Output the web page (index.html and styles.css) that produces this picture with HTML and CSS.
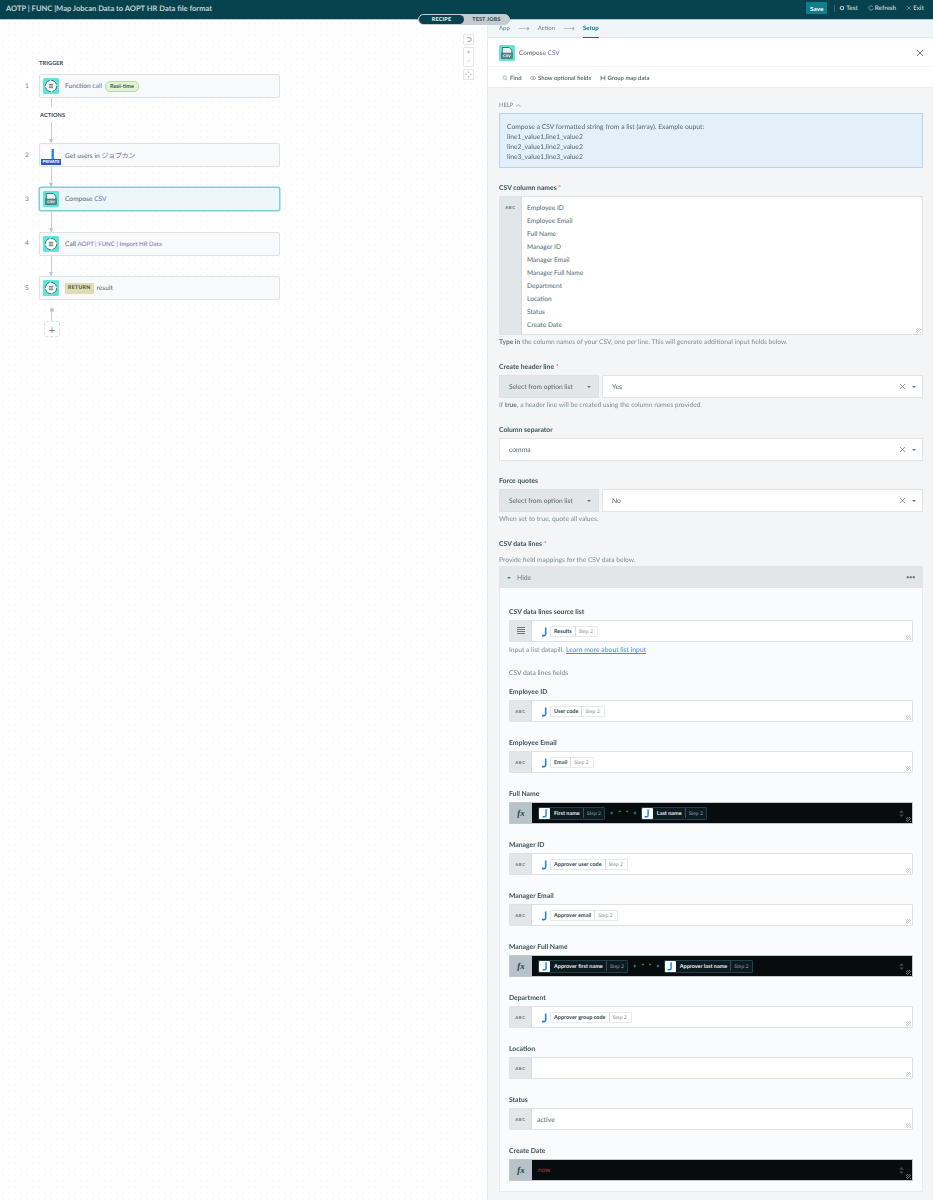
FILE: index.html
```html
<!DOCTYPE html>
<html lang="en">
<head>
<meta charset="utf-8">
<title>AOTP | FUNC |Map Jobcan Data to AOPT HR Data file format</title>
<link rel="stylesheet" href="styles.css">
</head>
<body>
<svg class="defs" aria-hidden="true">
  <symbol id="fn" viewBox="0 0 16 16">
    <rect width="16" height="16" rx="1.5" fill="#5fe6d6"/>
    <circle cx="8" cy="8" r="5.6" fill="#fff" stroke="#37505a" stroke-width=".8" stroke-dasharray="7 1.6"/>
    <path d="M5.8 6.3h4.4M5.8 8h4.4M5.8 9.700h4.400" stroke="#37505a" stroke-width=".8" fill="none"/>
  </symbol>
  <symbol id="j" viewBox="0 0 12 12">
    <path d="M7.300 1.500v7.200q0 1.800-1.800 1.800H3.200" fill="none" stroke="#1f7fe8" stroke-width="1.700"/>
  </symbol>
  <symbol id="updown" viewBox="0 0 8 10">
    <path d="M4 1L6.500 4h-5zM4 9L1.500 6h5z" fill="#3c494f"/>
  </symbol>
</svg>

<header class="topbar">
  <h1 class="title">AOTP | FUNC |Map Jobcan Data to AOPT HR Data file format</h1>
  <div class="actions">
    <button class="save">Save</button>
    <span class="divider"></span>
    <a class="act"><svg viewBox="0 0 8 8" class="act-ic"><circle cx="4" cy="4" r="2.300" fill="none" stroke="#b9cbd0" stroke-width="1.500"/></svg>Test</a>
    <a class="act"><svg viewBox="0 0 8 8" class="act-ic"><path d="M6.500 2.200A3 3 0 1 0 7 4.600" fill="none" stroke="#b9cbd0" stroke-width=".8"/></svg>Refresh</a>
    <a class="act"><svg viewBox="0 0 8 8" class="act-ic"><path d="M1.500 1.500l5 5M6.500 1.500l-5 5" stroke="#b9cbd0" stroke-width=".7"/></svg>Exit</a>
  </div>
</header>

<div class="toggle"><span class="tg on">RECIPE</span><span class="tg">TEST JOBS</span></div>

<div class="layout">
  <main class="canvas">
    <div class="zoomctl">
      <span class="zbtn"><svg viewBox="0 0 10 10"><path d="M3.500 3h2.500a2 2 0 0 1 0 4H4" fill="none" stroke="#65777f" stroke-width=".8"/></svg></span>
      <span class="zgroup"><span class="zsym">+</span><span class="zsym">−</span></span>
      <span class="zbtn"><svg viewBox="0 0 10 10"><path d="M5 1.500l1 1.200H4zM5 8.500l1-1.200H4zM1.500 5l1.200-1v2zM8.500 5l-1.200-1v2z" fill="#7b8b92"/></svg></span>
    </div>

    <div class="section-label first">TRIGGER</div>
    <div class="step-row">
      <span class="num">1</span>
      <div class="step"><svg class="ic"><use href="#fn"/></svg><span>Function <em>call</em></span><span class="rt">Real-time</span></div>
    </div>
    <div class="line l-a"></div>
    <div class="section-label actions-label">ACTIONS</div>
    <div class="line l-b arrow"></div>
    <div class="step-row">
      <span class="num">2</span>
      <div class="step"><span class="ic private"><svg class="j-main"><use href="#j"/></svg><span class="priv">PRIVATE</span></span><span>Get users in <em class="jp">ジョブカン</em></span></div>
    </div>
    <div class="line l-c arrow"></div>
    <div class="step-row">
      <span class="num">3</span>
      <div class="step active">
        <svg class="ic" viewBox="0 0 16 16"><rect width="16" height="16" rx="1.500" fill="#5fe6d6"/><path d="M3.300 8V2.500h7l2.500 2.500v3" fill="#e9fbf8" stroke="#33505a" stroke-width=".8"/><rect x="2.500" y="8" width="11" height="5.500" fill="#5b8a8c" stroke="#33505a" stroke-width=".5"/><text x="8" y="12.300" text-anchor="middle" class="csvtxt">CSV</text></svg>
        <span>Compose <em>CSV</em></span>
      </div>
    </div>
    <div class="line l-c arrow"></div>
    <div class="step-row">
      <span class="num">4</span>
      <div class="step"><svg class="ic"><use href="#fn"/></svg><span>Call <em class="narrow">AOPT | FUNC | Import HR Data</em></span></div>
    </div>
    <div class="line l-c arrow"></div>
    <div class="step-row">
      <span class="num">5</span>
      <div class="step"><svg class="ic"><use href="#fn"/></svg><span class="ret">RETURN</span><span>result</span></div>
    </div>
    <div class="line l-d"></div>
    <button class="add">+</button>
  </main>

  <aside class="panel">
    <nav class="tabs">
      <span class="tab">App</span><span class="tarrow">⟶</span><span class="tab">Action</span><span class="tarrow">⟶</span><span class="tab current">Setup</span>
    </nav>
    <div class="panel-head">
      <svg class="ic" viewBox="0 0 16 16"><rect width="16" height="16" rx="1.500" fill="#5fe6d6"/><path d="M3.300 8V2.500h7l2.500 2.500v3" fill="#e9fbf8" stroke="#33505a" stroke-width=".8"/><rect x="2.500" y="8" width="11" height="5.500" fill="#5b8a8c" stroke="#33505a" stroke-width=".5"/><text x="8" y="12.300" text-anchor="middle" class="csvtxt">CSV</text></svg>
      <span class="head-text">Compose <em>CSV</em></span>
      <svg class="close" viewBox="0 0 8 8"><path d="M1 1l6 6M7 1L1 7" stroke="#4c626a" stroke-width=".8"/></svg>
    </div>
    <div class="toolbar">
      <span class="tool"><svg viewBox="0 0 8 8"><circle cx="3.500" cy="3.500" r="2.300" fill="none" stroke="#6d8087" stroke-width=".7"/><path d="M5.200 5.200L7 7" stroke="#6d8087" stroke-width=".7"/></svg>Find</span>
      <span class="tool"><svg viewBox="0 0 8 8"><ellipse cx="4" cy="4" rx="3.500" ry="2.300" fill="none" stroke="#6d8087" stroke-width=".7"/><circle cx="4" cy="4" r="1" fill="#6d8087"/></svg>Show optional fields</span>
      <span class="tool"><svg viewBox="0 0 8 8"><path d="M1.500 1v6M6.500 1v6M1.500 4h5" stroke="#5a6f77" stroke-width="1.200"/></svg>Group map data</span>
    </div>

    <div class="form">
      <div class="help-label">HELP <svg viewBox="0 0 8 8"><path d="M1.500 5.200L4 2.800l2.500 2.400" fill="none" stroke="#7c8d94" stroke-width=".7"/></svg></div>
      <div class="help">
        <p>Compose a CSV formatted string from a list (array). Example ouput:</p>
        <p>line1_value1,line1_value2</p>
        <p>line2_value1,line2_value2</p>
        <p>line3_value1,line3_value2</p>
      </div>

      <label class="lab">CSV column names <i>*</i></label>
      <div class="box tall">
        <span class="gut abc">ABC</span>
        <div class="lines">
          <div>Employee ID</div><div>Employee Email</div><div>Full Name</div><div>Manager ID</div><div>Manager Email</div><div>Manager Full Name</div><div>Department</div><div>Location</div><div>Status</div><div>Create Date</div>
        </div>
        <span class="grip"></span>
      </div>
      <p class="hint"><b>Type in</b> the column names of your CSV, one per line. This will generate additional input fields below.</p>

      <label class="lab">Create header line <i>*</i></label>
      <div class="selrow">
        <span class="mode">Select from option list<span class="caret"></span></span>
        <span class="sel"><span class="val">Yes</span><svg class="x" viewBox="0 0 8 8"><path d="M1 1l6 6M7 1L1 7" stroke="#66797f" stroke-width=".8"/></svg><span class="caret"></span></span>
      </div>
      <p class="hint">If <b>true</b>, a header line will be created using the column names provided.</p>

      <label class="lab">Column separator</label>
      <div class="selrow gap">
        <span class="sel"><span class="val">comma</span><svg class="x" viewBox="0 0 8 8"><path d="M1 1l6 6M7 1L1 7" stroke="#66797f" stroke-width=".8"/></svg><span class="caret"></span></span>
      </div>

      <label class="lab">Force quotes</label>
      <div class="selrow">
        <span class="mode">Select from option list<span class="caret"></span></span>
        <span class="sel"><span class="val">No</span><svg class="x" viewBox="0 0 8 8"><path d="M1 1l6 6M7 1L1 7" stroke="#66797f" stroke-width=".8"/></svg><span class="caret"></span></span>
      </div>
      <p class="hint">When set to true, quote all values.</p>

      <label class="lab lab-tight">CSV data lines <i>*</i></label>
      <p class="hint intro">Provide field mappings for the CSV data below.</p>

      <section class="card">
        <div class="card-head"><span class="caret"></span><span class="hide">Hide</span><span class="dots">•••</span></div>
        <div class="card-body">
          <label class="lab">CSV data lines source list</label>
          <div class="box">
            <span class="gut"><svg viewBox="0 0 10 10"><path d="M1 1.500h8M1 3.500h8M1 5.500h8M1 7.500h8" stroke="#68787f" stroke-width="1"/></svg></span>
            <div class="content"><svg class="jlogo"><use href="#j"/></svg><span class="pill"><b>Results</b><span>Step 2</span></span></div>
            <span class="grip"></span>
          </div>
          <p class="hint listhint">Input a list datapill. <a>Learn more about list input</a></p>
          <p class="subhead">CSV data lines fields</p>

          <div class="field"><label class="lab">Employee ID</label>
            <div class="box"><span class="gut abc">ABC</span><div class="content"><svg class="jlogo"><use href="#j"/></svg><span class="pill"><b>User code</b><span>Step 2</span></span></div><span class="grip"></span></div></div>

          <div class="field"><label class="lab">Employee Email</label>
            <div class="box"><span class="gut abc">ABC</span><div class="content"><svg class="jlogo"><use href="#j"/></svg><span class="pill"><b>Email</b><span>Step 2</span></span></div><span class="grip"></span></div></div>

          <div class="field"><label class="lab">Full Name</label>
            <div class="box dark"><span class="gut fx">fx</span><div class="content">
              <span class="pill"><span class="jtile"><svg><use href="#j"/></svg></span><b>First name</b><span>Step 2</span></span>
              <span class="tok"><span class="op">+</span><span class="qt">"</span><span class="qt">"</span><span class="op">+</span></span>
              <span class="pill"><span class="jtile"><svg><use href="#j"/></svg></span><b>Last name</b><span>Step 2</span></span>
            </div><svg class="stepper"><use href="#updown"/></svg><span class="grip"></span></div></div>

          <div class="field"><label class="lab">Manager ID</label>
            <div class="box"><span class="gut abc">ABC</span><div class="content"><svg class="jlogo"><use href="#j"/></svg><span class="pill"><b>Approver user code</b><span>Step 2</span></span></div><span class="grip"></span></div></div>

          <div class="field"><label class="lab">Manager Email</label>
            <div class="box"><span class="gut abc">ABC</span><div class="content"><svg class="jlogo"><use href="#j"/></svg><span class="pill"><b>Approver email</b><span>Step 2</span></span></div><span class="grip"></span></div></div>

          <div class="field"><label class="lab">Manager Full Name</label>
            <div class="box dark"><span class="gut fx">fx</span><div class="content">
              <span class="pill"><span class="jtile"><svg><use href="#j"/></svg></span><b>Approver first name</b><span>Step 2</span></span>
              <span class="tok"><span class="op">+</span><span class="qt">"</span><span class="qt">"</span><span class="op">+</span></span>
              <span class="pill"><span class="jtile"><svg><use href="#j"/></svg></span><b>Approver last name</b><span>Step 2</span></span>
            </div><svg class="stepper"><use href="#updown"/></svg><span class="grip"></span></div></div>

          <div class="field"><label class="lab">Department</label>
            <div class="box"><span class="gut abc">ABC</span><div class="content"><svg class="jlogo"><use href="#j"/></svg><span class="pill"><b>Approver group code</b><span>Step 2</span></span></div><span class="grip"></span></div></div>

          <div class="field"><label class="lab">Location</label>
            <div class="box"><span class="gut abc">ABC</span><div class="content"></div><span class="grip"></span></div></div>

          <div class="field"><label class="lab">Status</label>
            <div class="box"><span class="gut abc">ABC</span><div class="content plain">active</div><span class="grip"></span></div></div>

          <div class="field last"><label class="lab">Create Date</label>
            <div class="box dark"><span class="gut fx">fx</span><div class="content"><span class="now">now</span></div><svg class="stepper"><use href="#updown"/></svg><span class="grip"></span></div></div>
        </div>
      </section>
    </div>
  </aside>
</div>
</body>
</html>
```
FILE: styles.css
```css
* { box-sizing: border-box; }
html, body { margin: 0; height: 1200px; overflow: hidden; }
body {
  font-family: "Lato", "Noto Sans CJK JP", sans-serif;
  font-size: 7px;
  color: #4b5f67;
  background: #fff;
  display: flex;
  flex-direction: column;
  position: relative;
  text-rendering: geometricPrecision;
  filter: blur(.3px);
  opacity: .999;
}
.defs { position: absolute; width: 0; height: 0; }
.csvtxt { font: 700 3.600px "Liberation Sans", sans-serif; fill: #fff; }
em { font-style: normal; color: #6a70bd; }
em.narrow { font-size: 6.100px; }

/* top bar */
.topbar {
  height: 20px;
  flex: none;
  background: #07434e;
  border-bottom: 1px solid #b9c7cb;
  display: flex;
  align-items: center;
  justify-content: space-between;
  padding: 0 9px 3px 6px;
}
.title { margin: 0; font-size: 7.550px; font-weight: 700; color: #c3d2d6; white-space: nowrap; }
.actions { display: flex; align-items: center; }
.save {
  width: 21px; height: 12px; border: 0; padding: 0;
  background: #0f7f8c; color: #fff; border-radius: 1px;
  font: 700 6.400px "Lato", sans-serif;
}
.divider { width: 1px; height: 7px; background: #33646e; margin: 0 4px 0 7px; }
.act { display: flex; align-items: center; gap: 1px; color: #b9cbd0; font-size: 6.300px; font-weight: 700; margin-right: 10px; }
.act:last-child { margin-right: 0; }
.act-ic { width: 6px; height: 6px; }

.toggle {
  position: absolute; left: 418px; top: 14px;
  width: 92px; height: 11px;
  background: #c5ccd1; border-radius: 6px;
  display: flex; align-items: stretch;
  font-size: 5.400px; font-weight: 900; letter-spacing: .2px;
  z-index: 3; color: #3d5058;
  border: 1px solid #c5ccd1;
}
.tg { display: flex; align-items: center; justify-content: center; flex: 1; }
.tg.on { flex: none; width: 45px; background: #07434e; color: #e6eef0; border-radius: 6px; }

.layout { display: flex; flex: 1; min-height: 0; }

/* canvas */
.canvas {
  width: 487px; flex: none;
  position: relative;
  padding: 37px 0 0 39px;
  background-color: #fff;
  background-image: radial-gradient(circle, #f0f2f4 .6px, transparent .8px);
  background-size: 6px 6px;
}
.zoomctl {
  position: absolute; left: 463px; top: 14px;
  width: 11px; display: flex; flex-direction: column; gap: 2px;
}
.zbtn, .zgroup {
  background: #fff; border: 1px solid #e2e6e9; border-radius: 1px;
  display: flex; align-items: center; justify-content: center;
}
.zbtn { height: 11px; }
.zbtn svg { width: 9px; height: 9px; }
.zgroup { height: 20px; flex-direction: column; }
.zsym { height: 9px; line-height: 9px; font-size: 6px; color: #8a989e; }
.section-label { font-size: 5.600px; font-weight: 900; color: #44565e; letter-spacing: .1px; line-height: 14px; }
.first { height: 12px; margin-bottom: 5px; }
.actions-label { height: 12px; margin: 2px 0 1px 1px; }
.step-row { position: relative; }
.num { position: absolute; left: -14px; top: 0; bottom: 0; display: flex; align-items: center; font-size: 6.500px; color: #6f8088; }
.step {
  width: 241px; height: 24px;
  background: #f8f9fb;
  border: 1px solid #dde2e7;
  border-radius: 2px;
  display: flex; align-items: center; gap: 6px;
  padding-left: 3px;
  font-size: 6.650px;
  color: #56666e;
}
.step.active { background: #edf6f9; border-color: #79d2d9; box-shadow: 0 0 0 .5px #79d2d9; }
.ic { width: 16px; height: 16px; flex: none; display: block; }
.private { position: relative; background: #fff; }
.j-main { width: 16px; height: 16px; }
.priv {
  position: absolute; left: -2px; bottom: -2px; width: 20px; height: 6px;
  background: #2758d6; color: #fff; font-size: 4.200px; font-weight: 900; line-height: 6px; text-align: center;
}
.jp { font-family: "Noto Sans CJK JP", sans-serif; font-size: 6.800px; }
.rt {
  margin-left: -3px; background: #dff3d6; border: 1px solid #b7dc9f; border-radius: 5px;
  font-size: 5.600px; color: #3e5b3b; font-weight: 700; padding: 0 4px; line-height: 9px;
}
.ret { background: #dddcb4; color: #55553a; font-size: 5.200px; font-weight: 900; padding: 0 3px; line-height: 11px; border-radius: 1px; letter-spacing: .3px; margin-right: -3px; }
.line { width: 1px; background: #c6ced4; margin-left: 12px; position: relative; }
.l-a { height: 9px; }
.l-b { height: 21px; }
.l-c { height: 20.400px; }
.l-d { height: 13px; margin-top: 8px; }
.arrow::after {
  content: ""; position: absolute; left: -2px; bottom: 0;
  border-left: 2.500px solid transparent; border-right: 2.500px solid transparent; border-top: 4px solid #b9c3c9;
}
.l-d::before { content: ""; position: absolute; left: -1.500px; top: 0; width: 4px; height: 4px; border-radius: 50%; background: #b9c3c9; }
.add {
  display: block; margin-left: 5px; width: 16px; height: 16px; padding: 0;
  border: 1px dashed #dbe0e4; background: #fff; border-radius: 2px;
  color: #7a8a90; font: 400 11px/13px "Lato", sans-serif;
}

/* panel */
.panel { flex: 1; min-width: 0; background: #f3f5f7; border-left: 1px solid #e9ecef; display: flex; flex-direction: column; }
.tabs {
  height: 18px; flex: none; background: #eef6f8;
  border-bottom: 1px solid #dbe7ea;
  display: flex; align-items: stretch; padding-left: 11px;
  font-size: 6px; color: #6b7d85;
}
.tab { display: flex; align-items: center; border-bottom: 1px solid transparent; height: 18px; }
.tab.current { color: #0e7480; font-weight: 700; border-bottom-color: #0e7480; }
.tarrow { display: flex; align-items: center; font-size: 8px; width: 28px; justify-content: center; color: #8c9ba1; font-family: "DejaVu Sans", sans-serif; }
.panel-head {
  height: 29px; flex: none; background: #fff;
  display: flex; align-items: center; gap: 4px; padding: 1px 9px 0 11px;
  font-size: 6.500px; color: #56666e;
  border-bottom: 1px solid #f1f3f5;
}
.head-text { padding-top: 2px; }
.close { width: 8px; height: 8px; margin-left: auto; }
.toolbar {
  height: 21px; flex: none; background: #fff;
  border-bottom: 1px solid #e8ebee;
  display: flex; align-items: center; gap: 8.500px; padding: 2px 0 0 14px;
  font-size: 5.900px; font-weight: 700; color: #5f7179;
}
.tool { display: flex; align-items: center; gap: 2px; }
.tool svg { width: 6px; height: 6px; }
.form { padding: 11px 10px 0 11px; flex: 1; }
.help-label { height: 12px; margin-bottom: 2px; display: flex; align-items: center; gap: 2px; font-size: 5.800px; color: #6d7f86; }
.help-label svg { width: 7px; height: 7px; }
.help {
  height: 55px; background: #e4f0f9; border: 1px solid #b5d5f0;
  padding: 8px 7px 0; margin-bottom: 13px; font-size: 6.750px; color: #51656d;
}
.help p { margin: 0; line-height: 10px; }
.lab { display: block; height: 12px; line-height: 14px; margin-bottom: 3px; font-size: 6.800px; font-weight: 700; color: #3e525a; }
.lab i { color: #e0534a; font-style: normal; font-weight: 400; }
.lab-tight { margin-bottom: 4px; }
.box {
  position: relative; display: flex; height: 22px;
  background: #fff; border: 1px solid #dde2e6; border-radius: 1px;
}
.tall { height: 139px; }
.gut {
  width: 22px; flex: none; background: #e3e6e9; border-right: 1px solid #d5dadf;
  display: flex; align-items: center; justify-content: center; color: #66787f;
}
.gut svg { width: 10px; height: 10px; }
.abc { font-size: 4.200px; font-weight: 900; letter-spacing: .7px; }
.tall .abc { align-items: flex-start; padding-top: 8px; }
.lines { padding: 5px 0 0 5px; font-size: 6.600px; color: #51656d; }
.lines div { height: 13px; line-height: 13px; }
.grip {
  position: absolute; right: 1px; bottom: 1px; width: 5px; height: 5px;
  background: repeating-linear-gradient(135deg, transparent 0 1px, #c3cbd0 1px 1.600px);
}
.dark .grip { background: repeating-linear-gradient(135deg, transparent 0 1px, #66737a 1px 1.600px); }
.hint { margin: 1px 0 12px; height: 12px; line-height: 12px; font-size: 6.650px; color: #7d8d94; }
.hint b { font-weight: 700; color: #65777f; }
.intro { margin: 0 0 1px; line-height: 14px; }
.selrow { display: flex; gap: 3px; height: 23px; }
.selrow.gap { margin-bottom: 13px; }
.mode {
  width: 100px; background: #e3e6e9; border: 1px solid #dde1e5;
  display: flex; align-items: center; justify-content: space-between; padding: 0 7px 0 9px;
  font-size: 6.600px; color: #51656d;
}
.sel {
  flex: 1; background: #fff; border: 1px solid #e1e5e8;
  display: flex; align-items: center; padding: 0 6px 0 9px;
  font-size: 6.800px; color: #51656d;
}
.val { flex: 1; }
.x { width: 7px; height: 7px; margin-right: 6px; }
.caret { width: 0; height: 0; border-left: 2.200px solid transparent; border-right: 2.200px solid transparent; border-top: 2.500px solid #63757c; }
.card { background: #fafbfc; border: 1px solid #e8ebee; border-top: 0; height: 626px; }
.card-head {
  height: 22px; background: #e3e6e9; border-bottom: 1px solid #e0e3e6;
  display: flex; align-items: center; padding: 2px 8px 0 8px; margin: 0 -1px;
  color: #67797f; font-size: 6.800px;
}
.hide { margin-left: 6px; flex: 1; }
.dots { font-size: 6px; letter-spacing: -.5px; color: #5d6f76; }
.card-body { padding: 17px 9px 0; }
.content { flex: 1; display: flex; align-items: center; padding-left: 7px; gap: 0; min-width: 0; }
.content.plain { font-size: 6.800px; color: #51656d; padding: 2px 0 0 5px; }
.jlogo { width: 11px; height: 11px; flex: none; margin-right: 0; }
.pill {
  height: 11px; display: inline-flex; align-items: center;
  background: #fff; border: 1px solid #e6eaed; border-radius: 1px;
  padding: 0 4px 0 3px; font-size: 5.100px; white-space: nowrap;
}
.pill b { font-size: 5.500px; font-weight: 700; color: #33464e; padding: 2.600px 3px 0 0; margin-right: 3px; border-right: 1px solid #d9dee2; line-height: 7px; }
.pill span { color: #7d8d94; }
.pill > span:last-child { padding-top: 1.400px; }
.listhint { margin: 2px 0 10px; line-height: 13px; }
.listhint a { color: #3f8fdc; text-decoration: underline; font-size: 6.800px; margin-left: .5px; }
.subhead { margin: 0 0 7px; height: 12px; line-height: 14px; font-size: 6.700px; color: #6f8088; font-weight: 400; }
.field { margin-bottom: 14px; }
.dark { background: #070c0f; border-color: #c2c9cf; }
.dark .gut { background: #b8c2ca; border-right: 0; }
.fx { font: italic 700 9px "Liberation Serif", serif; color: #2b3a40; }
.dark .content { padding-left: 6px; gap: 0; }
.dark .pill { background: #0d1a20; border-color: #20404c; height: 13px; padding: 0 3px 0 0; }
.dark .pill b { color: #e9eef0; border-color: #3b525b; }
.dark .pill span:last-child { color: #93a4ab; }
.jtile { width: 11px; height: 11px; background: #fff; border-radius: 1px; margin-right: 4px; display: flex; align-items: center; justify-content: center; }
.jtile svg { width: 10px; height: 10px; }
.tok { display: inline-flex; gap: 5px; padding: 0 4px 0 5px; font-size: 6px; font-weight: 700; }
.op { color: #4fa9c9; }
.qt { color: #9ead3d; }
.now { color: #b9413f; font-size: 6.500px; }
.stepper { position: absolute; right: 7px; top: 6px; width: 7px; height: 9px; }
```
